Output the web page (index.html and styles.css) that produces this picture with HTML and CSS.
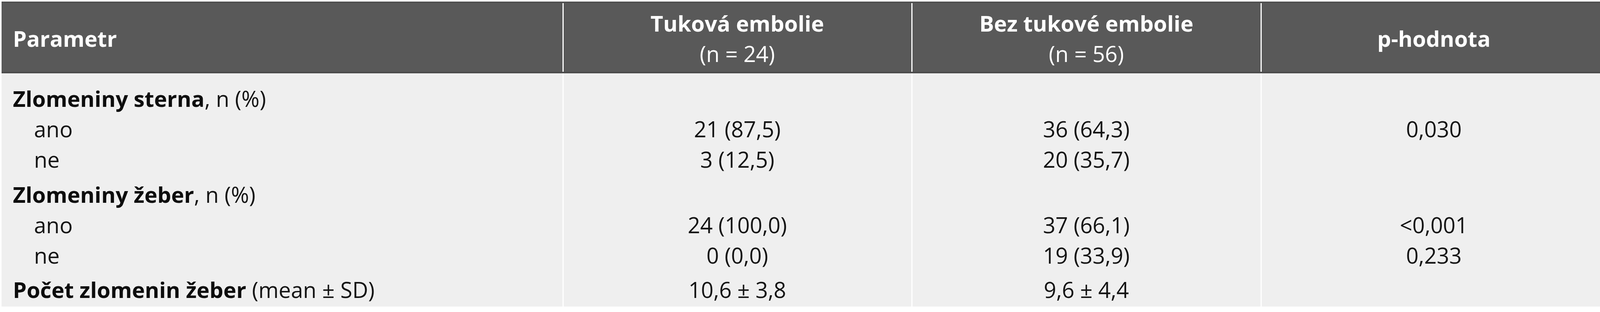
FILE: index.html
```html
<!DOCTYPE html>
<html lang="cs">
<head>
<meta charset="utf-8">
<title>Tabulka</title>
<link rel="stylesheet" href="styles.css">
</head>
<body>
<table class="data">
  <colgroup>
    <col class="c1"><col class="c2"><col class="c3"><col class="c4">
  </colgroup>
  <thead>
    <tr>
      <th class="left">Parametr</th>
      <th>Tuková embolie<br><span class="n">(n = 24)</span></th>
      <th>Bez tukové embolie<br><span class="n">(n = 56)</span></th>
      <th>p-hodnota</th>
    </tr>
  </thead>
  <tbody>
    <tr class="sec first">
      <td class="left"><b>Zlomeniny sterna</b>, n (%)</td><td></td><td></td><td></td>
    </tr>
    <tr>
      <td class="left sub">ano</td><td>21 (87,5)</td><td>36 (64,3)</td><td>0,030</td>
    </tr>
    <tr>
      <td class="left sub">ne</td><td>3 (12,5)</td><td>20 (35,7)</td><td></td>
    </tr>
    <tr class="sec">
      <td class="left"><b>Zlomeniny žeber</b>, n (%)</td><td></td><td></td><td></td>
    </tr>
    <tr>
      <td class="left sub">ano</td><td>24 (100,0)</td><td>37 (66,1)</td><td>&lt;0,001</td>
    </tr>
    <tr>
      <td class="left sub">ne</td><td>0 (0,0)</td><td>19 (33,9)</td><td>0,233</td>
    </tr>
    <tr class="sec last">
      <td class="left"><b>Počet zlomenin žeber</b> (mean ± SD)</td><td>10,6 ± 3,8</td><td>9,6 ± 4,4</td><td></td>
    </tr>
  </tbody>
</table>
</body>
</html>
```
FILE: styles.css
```css
html, body {
  margin: 0;
  padding: 0;
  background: #ffffff;
}

.data {
  margin: 4px 0 0 4px;
  width: 4108px;
  border-collapse: collapse;
  table-layout: fixed;
  font-family: "Open Sans", "Noto Sans", "Liberation Sans", sans-serif;
  font-size: 56px;
  line-height: 78px;
  color: #141414;
}

.c1 { width: 1437px; }
.c2 { width: 893px; }
.c3 { width: 894px; }
.c4 { width: 884px; }

.data th {
  background: #595959;
  color: #ffffff;
  font-weight: 700;
  text-align: center;
  vertical-align: middle;
  padding: 12px 0 8px;
  border-top: 4px solid #505050;
  border-bottom: 4px solid #4b4b4b;
  border-left: 3px solid #ffffff;
}

.data th .n {
  font-weight: 400;
}

.data thead tr {
  border-bottom: 3px solid #ffffff;
}

.data td {
  background: #efefef;
  text-align: center;
  padding: 0;
  border-left: 3px solid #ffffff;
  white-space: nowrap;
}

.data th.left,
.data td.left {
  text-align: left;
  border-left: 0;
  padding-left: 29px;
}

.data td.sub {
  padding-left: 83px;
}

.data tr.sec td {
  padding-top: 12px;
}

.data tr.sec.first td {
  padding-top: 25px;
}

.data tr.sec.last td {
  padding-top: 10px;
  padding-bottom: 5px;
}

.data td b {
  font-weight: 700;
  color: #0d0d0d;
}
```
